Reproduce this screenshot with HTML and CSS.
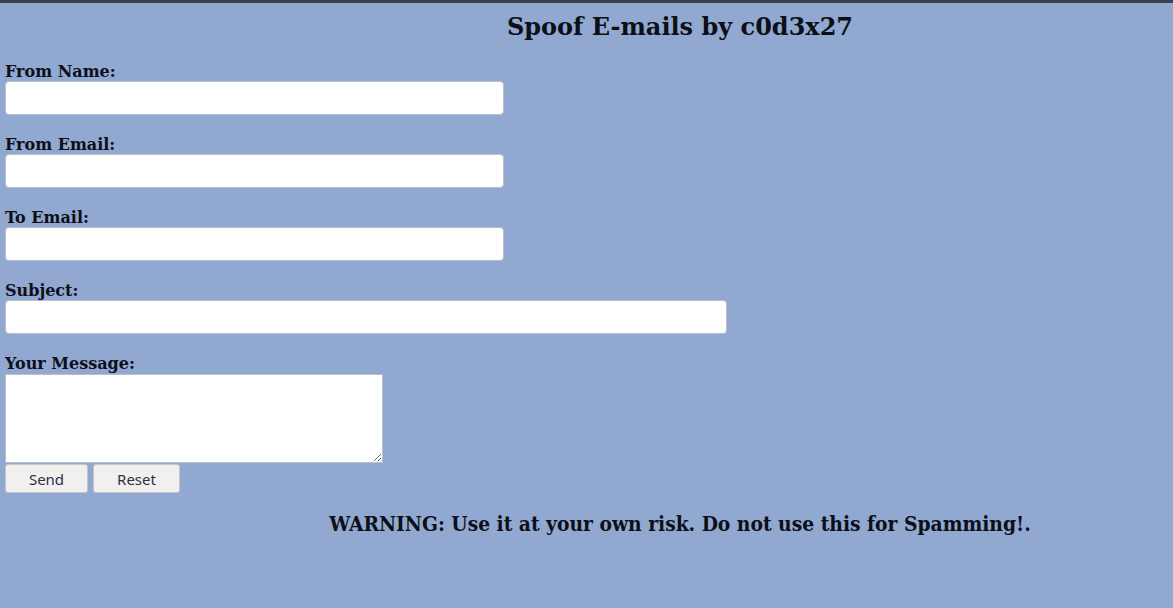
FILE: index.html
```html
<!DOCTYPE html>
<html>
<head>
<meta charset="utf-8">
<title>Spoof E-mails</title>
<link rel="stylesheet" href="styles.css">
</head>
<body>
<div class="topbar"></div>
<h1 class="title">Spoof E-mails by c0d3x27</h1>
<form class="form">
  <div class="field">
    <label class="label">From Name:</label>
    <input class="input" type="text">
  </div>
  <div class="field">
    <label class="label">From Email:</label>
    <input class="input" type="text">
  </div>
  <div class="field">
    <label class="label">To Email:</label>
    <input class="input" type="text">
  </div>
  <div class="field">
    <label class="label">Subject:</label>
    <input class="input input-wide" type="text">
  </div>
  <div class="field field-last">
    <label class="label">Your Message:</label>
    <textarea class="textarea"></textarea>
  </div>
  <div class="buttons">
    <button class="btn btn-send" type="button">Send</button>
    <button class="btn btn-reset" type="button">Reset</button>
  </div>
</form>
<p class="warning">WARNING: Use it at your own risk. Do not use this for Spamming!.</p>
</body>
</html>
```
FILE: styles.css
```css
html, body {
  margin: 0;
  padding: 0;
}
body {
  background: #91a8d1;
  font-family: "DejaVu Serif", serif;
  color: #0d0f17;
  height: 608px;
  overflow: hidden;
}
.topbar {
  height: 3px;
  background: #3b4050;
}
.title {
  margin: 10px 0 0 0;
  padding-left: 187px;
  text-align: center;
  font-size: 24px;
  line-height: 28px;
  font-weight: bold;
}
.form {
  margin: 21px 0 0 5px;
  display: flex;
  flex-direction: column;
  align-items: flex-start;
}
.field {
  display: flex;
  flex-direction: column;
  align-items: flex-start;
  margin-bottom: 20px;
}
.field-last {
  margin-bottom: 1px;
}
.label {
  font-size: 16px;
  line-height: 19px;
  font-weight: bold;
}
.input {
  box-sizing: border-box;
  width: 499px;
  height: 34px;
  margin: 0;
  background: #fff;
  border: 1px solid #b9bfcc;
  border-radius: 4px;
}
.input-wide {
  width: 722px;
}
.textarea {
  box-sizing: border-box;
  width: 378px;
  height: 89px;
  margin: 1px 0 0 0;
  background: #fff;
  border: 1px solid #b9bfcc;
  border-radius: 0;
  resize: both;
}
.buttons {
  display: flex;
  gap: 5px;
}
.btn {
  box-sizing: border-box;
  height: 29px;
  padding: 0;
  margin: 0;
  background: #f1f0ef;
  border: 1px solid #c4c6cc;
  border-radius: 3px;
  font-family: "Noto Sans", sans-serif;
  font-size: 15px;
  color: #2b3048;
}
.btn-send {
  width: 83px;
}
.btn-reset {
  width: 87px;
}
.warning {
  margin: 19px 0 0 0;
  padding-left: 187px;
  text-align: center;
  font-size: 20.8px;
  font-weight: bold;
  font-stretch: condensed;
  line-height: 24px;
}
```
